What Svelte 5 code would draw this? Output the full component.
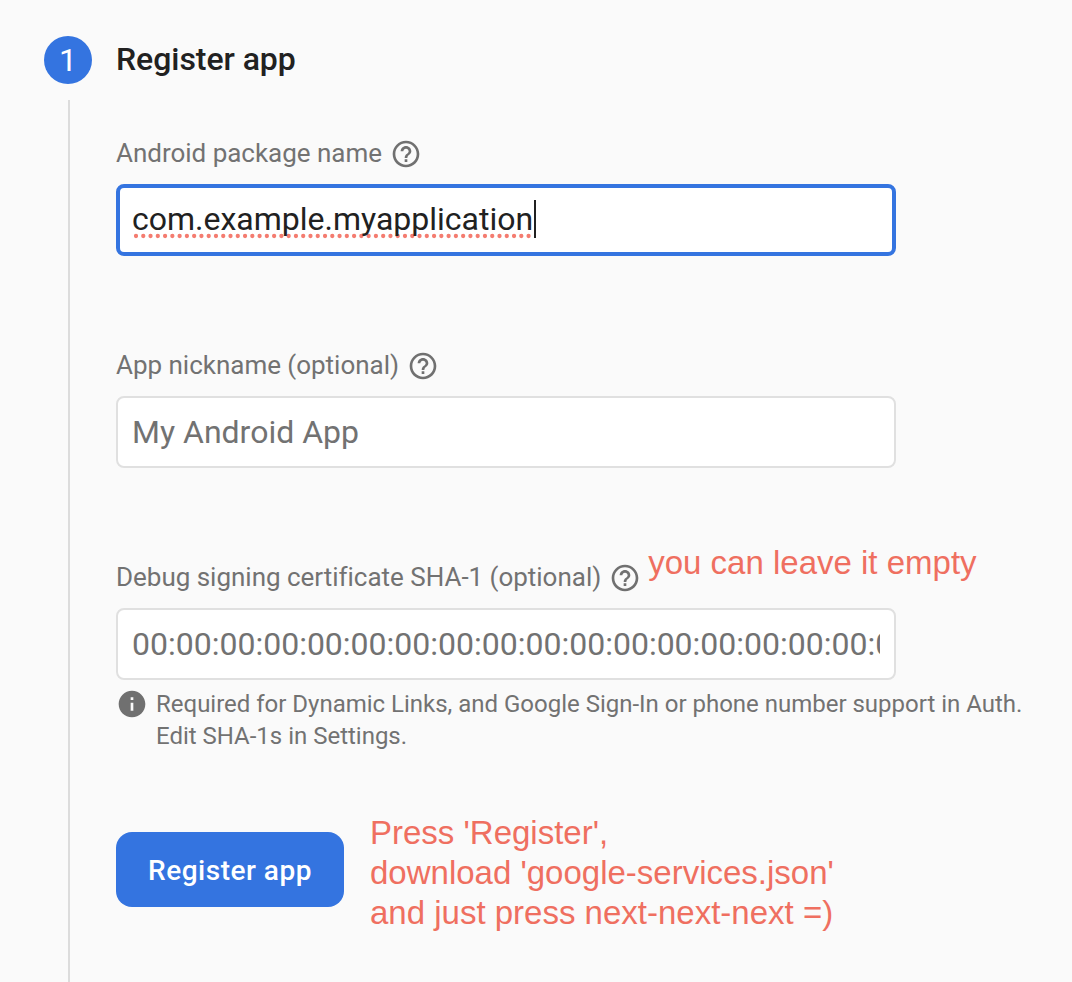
<script>
  const labels = [
    { id: 'package', text: 'Android package name' },
    { id: 'nickname', text: 'App nickname (optional)' },
    { id: 'sha', text: 'Debug signing certificate SHA-1 (optional)' }
  ];
</script>

{#snippet help()}
  <svg class="help" viewBox="0 0 24 24" aria-hidden="true">
    <path d="M11 18h2v-2h-2v2zm1-16C6.48 2 2 6.48 2 12s4.48 10 10 10 10-4.48 10-10S17.52 2 12 2zm0 18c-4.41 0-8-3.59-8-8s3.59-8 8-8 8 3.59 8 8-3.59 8-8 8zm0-14c-2.21 0-4 1.79-4 4h2c0-1.1.9-2 2-2s2 .9 2 2c0 2-3 1.75-3 5h2c0-2.25 3-2.5 3-5 0-2.21-1.79-4-4-4z" />
  </svg>
{/snippet}

<main class="page">
  <header class="step">
    <div class="number">1</div>
    <h1>Register app</h1>
  </header>

  <section class="content">
    {#each labels as field}
      <div class="field">
        <div class="label"><span class="text">{field.text}</span>{@render help()}
          {#if field.id === 'sha'}<span class="note empty-note">you can leave it empty</span>{/if}
        </div>
        {#if field.id === 'package'}
          <div class="input active"><span class="value"><svg class="squiggle" width="404" height="6"><line x1="4" y1="3" x2="398" y2="3" /></svg><span class="typed">com.example.myapplication</span></span><i class="caret"></i></div>
        {:else if field.id === 'nickname'}
          <div class="input"><span>My Android App</span></div>
        {:else}
          <div class="input"><span class="fingerprint">00:00:00:00:00:00:00:00:00:00:00:00:00:00:00:00:00:00:00:00</span></div>
        {/if}
      </div>
    {/each}

    <div class="hint">
      <svg viewBox="0 0 24 24" aria-hidden="true"><path d="M12 2C6.48 2 2 6.48 2 12s4.48 10 10 10 10-4.48 10-10S17.52 2 12 2zm1 15h-2v-6h2v6zm0-8h-2V7h2v2z" /></svg>
      <p>Required for Dynamic Links, and Google Sign-In or phone number support in Auth.<br />Edit SHA-1s in Settings.</p>
    </div>

    <div class="actions">
      <button type="button">Register app</button>
      <p class="note">Press 'Register',<br />download 'google-services.json'<br />and just press next-next-next =)</p>
    </div>
  </section>
</main>

<style>
  :global(body) { margin: 0; background: #fafafa; }
  .page { box-sizing: border-box; width: 1072px; height: 982px; padding: 36px 0 0 44px; overflow: hidden; background: #fafafa; color: #212121; font-family: Roboto, sans-serif; }
  .step { display: flex; align-items: center; gap: 24px; height: 48px; }
  .number { width: 48px; height: 48px; border-radius: 50%; background: #3474e0; color: #fff; font-size: 32px; font-weight: 400; line-height: 48px; text-align: center; }
  h1 { margin: 0; font-size: 32px; font-weight: 500; line-height: 46px; letter-spacing: -.05px; padding-bottom: 2px; }
  .content { box-sizing: border-box; height: 882px; margin: 16px 0 0 24px; padding: 36px 0 0 46px; border-left: 2px solid #dcdcdc; }
  .field { height: 212px; }
  .field:nth-child(3) { height: 128px; }
  .label { display: flex; align-items: center; height: 36px; margin-bottom: 12px; font-size: 26px; line-height: 34px; color: #727272; white-space: nowrap; }
  .text { padding-bottom: 2px; letter-spacing: -.02px; }
  .help { flex: none; width: 32px; height: 32px; margin-left: 8px; fill: #707070; }
  .input { display: flex; align-items: center; box-sizing: border-box; width: 780px; height: 72px; padding: 0 14px; overflow: hidden; border: 2px solid #e0e0e0; border-radius: 8px; background: #fff; color: #727272; font-size: 32px; line-height: 40px; white-space: nowrap; }
  .input.active { padding: 0 12px 2px; border: 4px solid #3474e0; color: #212121; }
  .value { position: relative; }
  .typed { position: relative; }
  .squiggle { position: absolute; left: 0; top: 34px; }
  .squiggle line { stroke: #f47c70; stroke-width: 4.3; stroke-linecap: round; stroke-dasharray: 0 7.27; }
  .caret { width: 2px; height: 38px; margin-left: 1px; background: #212121; }
  .fingerprint { width: 748px; overflow: hidden; }
  .hint { display: flex; gap: 8px; height: 80px; color: #727272; }
  .hint svg { flex: none; width: 32px; height: 32px; fill: #707070; }
  .hint p { margin: 0; font-size: 24px; line-height: 32px; letter-spacing: -.01px; white-space: nowrap; }
  .actions { display: flex; gap: 26px; margin-top: 64px; }
  button { width: 228px; height: 75px; padding: 2px 0 0; border: 0; border-radius: 16px; background: #3474e0; color: #fff; font: 500 28px/73px Roboto, sans-serif; letter-spacing: .5px; }
  .note { margin: 0; color: #ef6f60; font-family: "Liberation Sans", Arial, sans-serif; font-size: 33px; line-height: 40px; white-space: nowrap; }
  .actions .note { margin-top: -19px; }
  .empty-note { margin: 0 0 30px 7px; }
</style>
